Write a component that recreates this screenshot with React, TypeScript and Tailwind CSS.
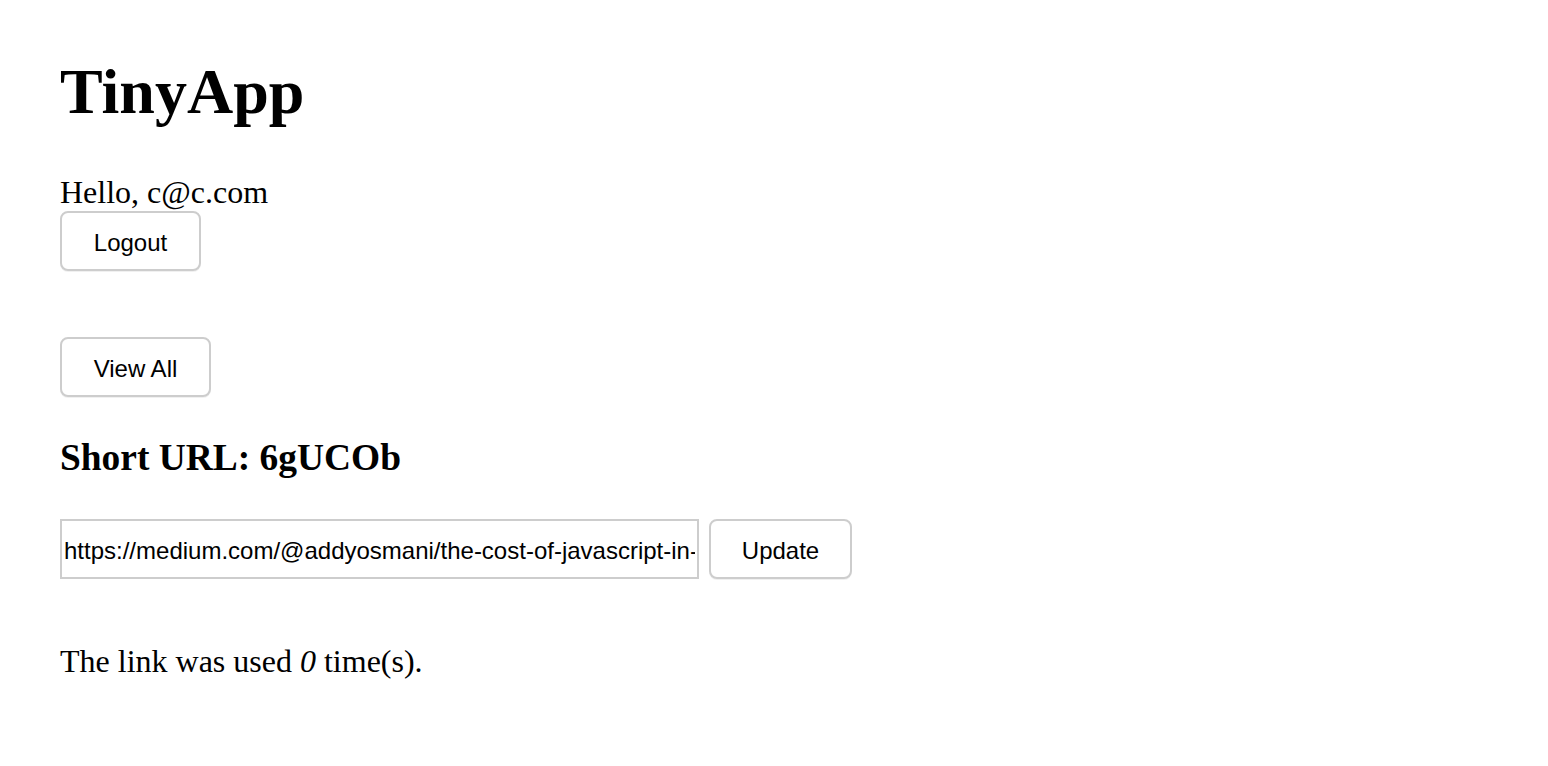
const btn =
  "block h-[60px] rounded-[8px] border-2 border-[#cdcdcd] bg-white pt-[4px] text-center text-[24px] leading-none text-black font-['Liberation_Sans',Arial,sans-serif] shadow-[0_1px_0_rgba(0,0,0,0.06)]";

export default function App() {
  return (
    <div className="min-h-screen bg-white pl-[60px] pt-[60px] text-black font-['Liberation_Serif','Times_New_Roman',serif]">
      <h1 className="text-[64px] font-bold leading-none">TinyApp</h1>

      <div className="mt-[50px]">
        <p className="text-[32px] leading-[36.8px]">Hello, c@c.com</p>
        <button className={`${btn} w-[141px]`}>Logout</button>
      </div>

      <button className={`${btn} mt-[66px] w-[151px]`}>View All</button>

      <h3 className="mt-[39px] text-[37.44px] font-bold leading-[43px]">Short URL: 6gUCOb</h3>

      <form className="mt-[40px] flex items-center gap-[10px]" onSubmit={(e) => e.preventDefault()}>
        <input
          type="text"
          defaultValue="https://medium.com/@addyosmani/the-cost-of-javascript-in-2018-7d8950fbb5d4"
          className="h-[60px] w-[639px] border-2 border-[#cdcdcd] bg-white px-[2px] pt-[4px] text-[24px] text-black outline-none font-['Liberation_Sans',Arial,sans-serif]"
        />
        <button type="submit" className={`${btn} w-[143px]`}>Update</button>
      </form>

      <p className="mt-[64px] text-[32px] leading-[36.8px]">
        The link was used <em>0</em> time(s).
      </p>
    </div>
  );
}
